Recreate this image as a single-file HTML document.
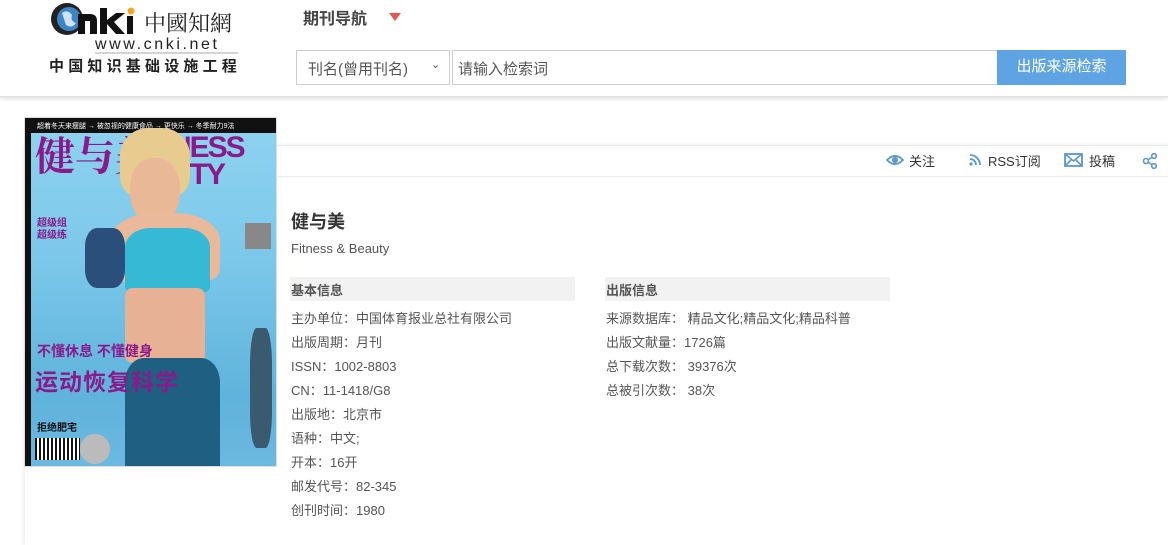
<!DOCTYPE html>
<html><head><meta charset="utf-8">
<style>
*{margin:0;padding:0;box-sizing:border-box}
body{width:1168px;height:514px;overflow:hidden;background:#fff;font-family:"Liberation Sans","Noto Sans CJK SC",sans-serif;color:#333;position:relative}
.hdr{position:absolute;left:0;top:0;width:1168px;height:97px;background:#fff;border-bottom:1px solid #e2e2e2;box-shadow:0 2px 4px rgba(0,0,0,.12)}
.abs{position:absolute}
.sel{left:296px;top:50px;width:154px;height:35px;border:1px solid #ccc;font-size:15px;color:#555;padding:7px 0 0 11px}
.inp{left:452px;top:50px;width:546px;height:35px;border:1px solid #ccc;font-size:15px;color:#555;padding:7px 0 0 5px}
.btn{left:997px;top:50px;width:129px;height:35px;background:#5ea4e3;color:#fff;font-size:15px;text-align:center;line-height:34px}
.panel{position:absolute;left:25px;top:145px;width:1150px;height:400px;border-top:1px solid #e8e8e8;box-shadow:-2px 0 4px rgba(0,0,0,.07)}
.tb{font-size:13px;color:#333}
.sec{position:absolute;height:24px;background:#f2f2f2;font-size:13px;font-weight:bold;color:#555;padding:3px 0 0 1px}
.row{position:absolute;font-size:13px;color:#555;white-space:nowrap}
</style></head><body>
<div class="hdr"></div>
<!-- logo -->
<svg class="abs" style="left:48px;top:0px" width="195" height="76" viewBox="0 0 195 76">
<circle cx="19" cy="19" r="16" fill="#222"/>
<circle cx="21" cy="19" r="12" fill="#3d85c6"/>
<path d="M14 13 q6 -4 10 2 q-2 6 4 8 q-4 6 -10 2z" fill="#cfe3f5"/>
<rect x="30" y="14" width="7" height="20" fill="#111"/>
<path d="M30 14 h12 q7 0 7 7 v13 h-7 v-13 h-12z" fill="#111"/>
<path d="M52 8 h7 v12 l9 -7 h9 l-11 9 l11 12 h-9 l-9 -10 v10 h-7z" fill="#111"/>
<rect x="79" y="16" width="6" height="18" fill="#111"/><circle cx="83" cy="11" r="3.5" fill="#f5a623"/>
<text x="96" y="31" font-size="22" font-family="Noto Serif CJK SC,serif" fill="#222">中國知網</text>
<text x="47" y="49" font-size="16" letter-spacing="2.6" font-family="Liberation Sans,sans-serif" fill="#222">www.cnki.net</text>
<line x1="47" y1="53" x2="190" y2="53" stroke="#aaa" stroke-width="1"/>
<text x="1" y="71" font-size="15" font-weight="bold" letter-spacing="4.2" font-family="Noto Sans CJK SC,sans-serif" fill="#222">中国知识基础设施工程</text>
</svg>
<div class="abs" style="left:303px;top:5px;font-size:16px;font-weight:bold;color:#444">期刊导航</div>
<div class="abs" style="left:389px;top:13px;width:0;height:0;border-left:6px solid transparent;border-right:6px solid transparent;border-top:8px solid #e8554e"></div>
<div class="abs sel">刊名(曾用刊名)<span style="position:absolute;left:134px;top:7px;font-size:11px">&#8964;</span></div>
<div class="abs inp">请输入检索词</div>
<div class="abs btn">出版来源检索</div>

<div class="panel"></div>
<!-- toolbar -->
<svg class="abs" style="left:886px;top:152px" width="18" height="16" viewBox="0 0 18 16"><path d="M1 8 Q9 0 17 8 Q9 16 1 8z" fill="none" stroke="#5a96d2" stroke-width="1.8"/><circle cx="9" cy="8" r="3" fill="#5a96d2"/></svg>
<div class="abs tb" style="left:909px;top:151px">关注</div>
<svg class="abs" style="left:969px;top:154px" width="12" height="12" viewBox="0 0 12 12"><circle cx="2" cy="10" r="1.6" fill="#5a96d2"/><path d="M1 5 a6 6 0 0 1 6 6 M1 1 a10 10 0 0 1 10 10" fill="none" stroke="#5a96d2" stroke-width="1.8"/></svg>
<div class="abs tb" style="left:988px;top:151px">RSS订阅</div>
<svg class="abs" style="left:1064px;top:153px" width="19" height="14" viewBox="0 0 19 14"><rect x="1" y="1" width="17" height="12" fill="none" stroke="#5a96d2" stroke-width="1.8"/><path d="M1 1 L9.5 8 L18 1 M1 13 L7 7 M18 13 L12 7" fill="none" stroke="#5a96d2" stroke-width="1.6"/></svg>
<div class="abs tb" style="left:1089px;top:151px">投稿</div>
<svg class="abs" style="left:1142px;top:153px" width="16" height="16" viewBox="0 0 16 16"><path d="M4 8 L12 3 M4 8 L12 13" stroke="#5a96d2" stroke-width="1.6"/><circle cx="4" cy="8" r="2.5" fill="#fff" stroke="#5a96d2" stroke-width="1.6"/><circle cx="12" cy="3" r="2.3" fill="#fff" stroke="#5a96d2" stroke-width="1.6"/><circle cx="12" cy="13" r="2.3" fill="#fff" stroke="#5a96d2" stroke-width="1.6"/></svg>
<div class="abs" style="top:176px;width:890px;height:1px;background:#ececec;left:278px"></div>

<!-- cover -->
<div class="abs" style="left:24px;top:117px;width:253px;height:350px;background:linear-gradient(180deg,#8fd3f0 0%,#7cc8ea 40%,#5fb3dc 80%,#6cb8e0 100%);overflow:hidden;border:1px solid #ddd">
 <div class="abs" style="left:0;top:0;width:253px;height:15px;background:#111;color:#fff;font-size:7px;padding:3px 0 0 12px;white-space:nowrap">超着冬天来瘦腿 → 被忽视的健康食品 → 更快乐 → 冬季耐力9法</div>
 <div class="abs" style="left:0;top:0;width:6px;height:350px;background:#111"></div>
 <div class="abs" style="left:10px;top:14px;font-size:40px;font-weight:bold;color:#8a1a8a;font-family:'Noto Serif CJK SC',serif;line-height:44px">健与美</div>
 <div class="abs" style="left:145px;top:16px;font-size:30px;font-weight:bold;color:#8a1a8a;line-height:27px;letter-spacing:-2px">NESS<br>UTY</div>
 <div class="abs" style="left:95px;top:10px;width:70px;height:70px;border-radius:40% 40% 30% 30%;background:#e8cc8f"></div>
 <div class="abs" style="left:105px;top:40px;width:50px;height:65px;border-radius:45%;background:#e9b896"></div>
 <div class="abs" style="left:85px;top:95px;width:110px;height:70px;border-radius:40% 40% 20% 20%;background:#eab89a"></div>
 <div class="abs" style="left:100px;top:110px;width:85px;height:65px;border-radius:30% 30% 10% 10%;background:#36b9d4"></div>
 <div class="abs" style="left:100px;top:170px;width:80px;height:75px;background:#e7b195;border-radius:10%"></div>
 <div class="abs" style="left:100px;top:240px;width:95px;height:120px;background:#1e5f82;border-radius:20% 20% 0 0"></div>
 <div class="abs" style="left:12px;top:100px;width:40px;height:50px;font-size:10px;font-weight:bold;color:#8a1a8a;line-height:12px">超级组<br>超级练</div>
 <div class="abs" style="left:60px;top:110px;width:40px;height:60px;background:#2a4f7a;border-radius:30%"></div>
 <div class="abs" style="left:12px;top:223px;font-size:14px;font-weight:bold;color:#8a1a8a">不懂休息 不懂健身</div>
 <div class="abs" style="left:10px;top:245px;font-size:23px;font-weight:bold;color:#8a1a8a;letter-spacing:1px">运动恢复科学</div>
 <div class="abs" style="left:12px;top:301px;font-size:10px;font-weight:bold;color:#111">拒绝肥宅</div>
 <div class="abs" style="left:10px;top:320px;width:45px;height:22px;background:repeating-linear-gradient(90deg,#111 0 2px,#fff 2px 4px)"></div>
 <div class="abs" style="left:55px;top:316px;width:30px;height:30px;border-radius:50%;background:#bbb"></div>
 <div class="abs" style="left:220px;top:105px;width:26px;height:26px;background:#888"></div>
 <div class="abs" style="left:225px;top:210px;width:22px;height:120px;background:#3a5a70;border-radius:30%"></div>
</div>

<div class="abs" style="left:291px;top:208px;font-size:18px;font-weight:bold;color:#333">健与美</div>
<div class="abs" style="left:291px;top:241px;font-size:13px;color:#555">Fitness &amp; Beauty</div>

<div class="sec" style="left:290px;top:277px;width:285px">基本信息</div>
<div class="sec" style="left:605px;top:277px;width:285px">出版信息</div>
<div class="row" style="left:291px;top:308px">主办单位：中国体育报业总社有限公司</div>
<div class="row" style="left:291px;top:332px">出版周期：月刊</div>
<div class="row" style="left:291px;top:356px">ISSN：1002-8803</div>
<div class="row" style="left:291px;top:380px">CN：11-1418/G8</div>
<div class="row" style="left:291px;top:404px">出版地：北京市</div>
<div class="row" style="left:291px;top:428px">语种：中文;</div>
<div class="row" style="left:291px;top:452px">开本：16开</div>
<div class="row" style="left:291px;top:476px">邮发代号：82-345</div>
<div class="row" style="left:291px;top:500px">创刊时间：1980</div>
<div class="row" style="left:606px;top:308px">来源数据库： 精品文化;精品文化;精品科普</div>
<div class="row" style="left:606px;top:332px">出版文献量：1726篇</div>
<div class="row" style="left:606px;top:356px">总下载次数： 39376次</div>
<div class="row" style="left:606px;top:380px">总被引次数： 38次</div>
</body></html>
